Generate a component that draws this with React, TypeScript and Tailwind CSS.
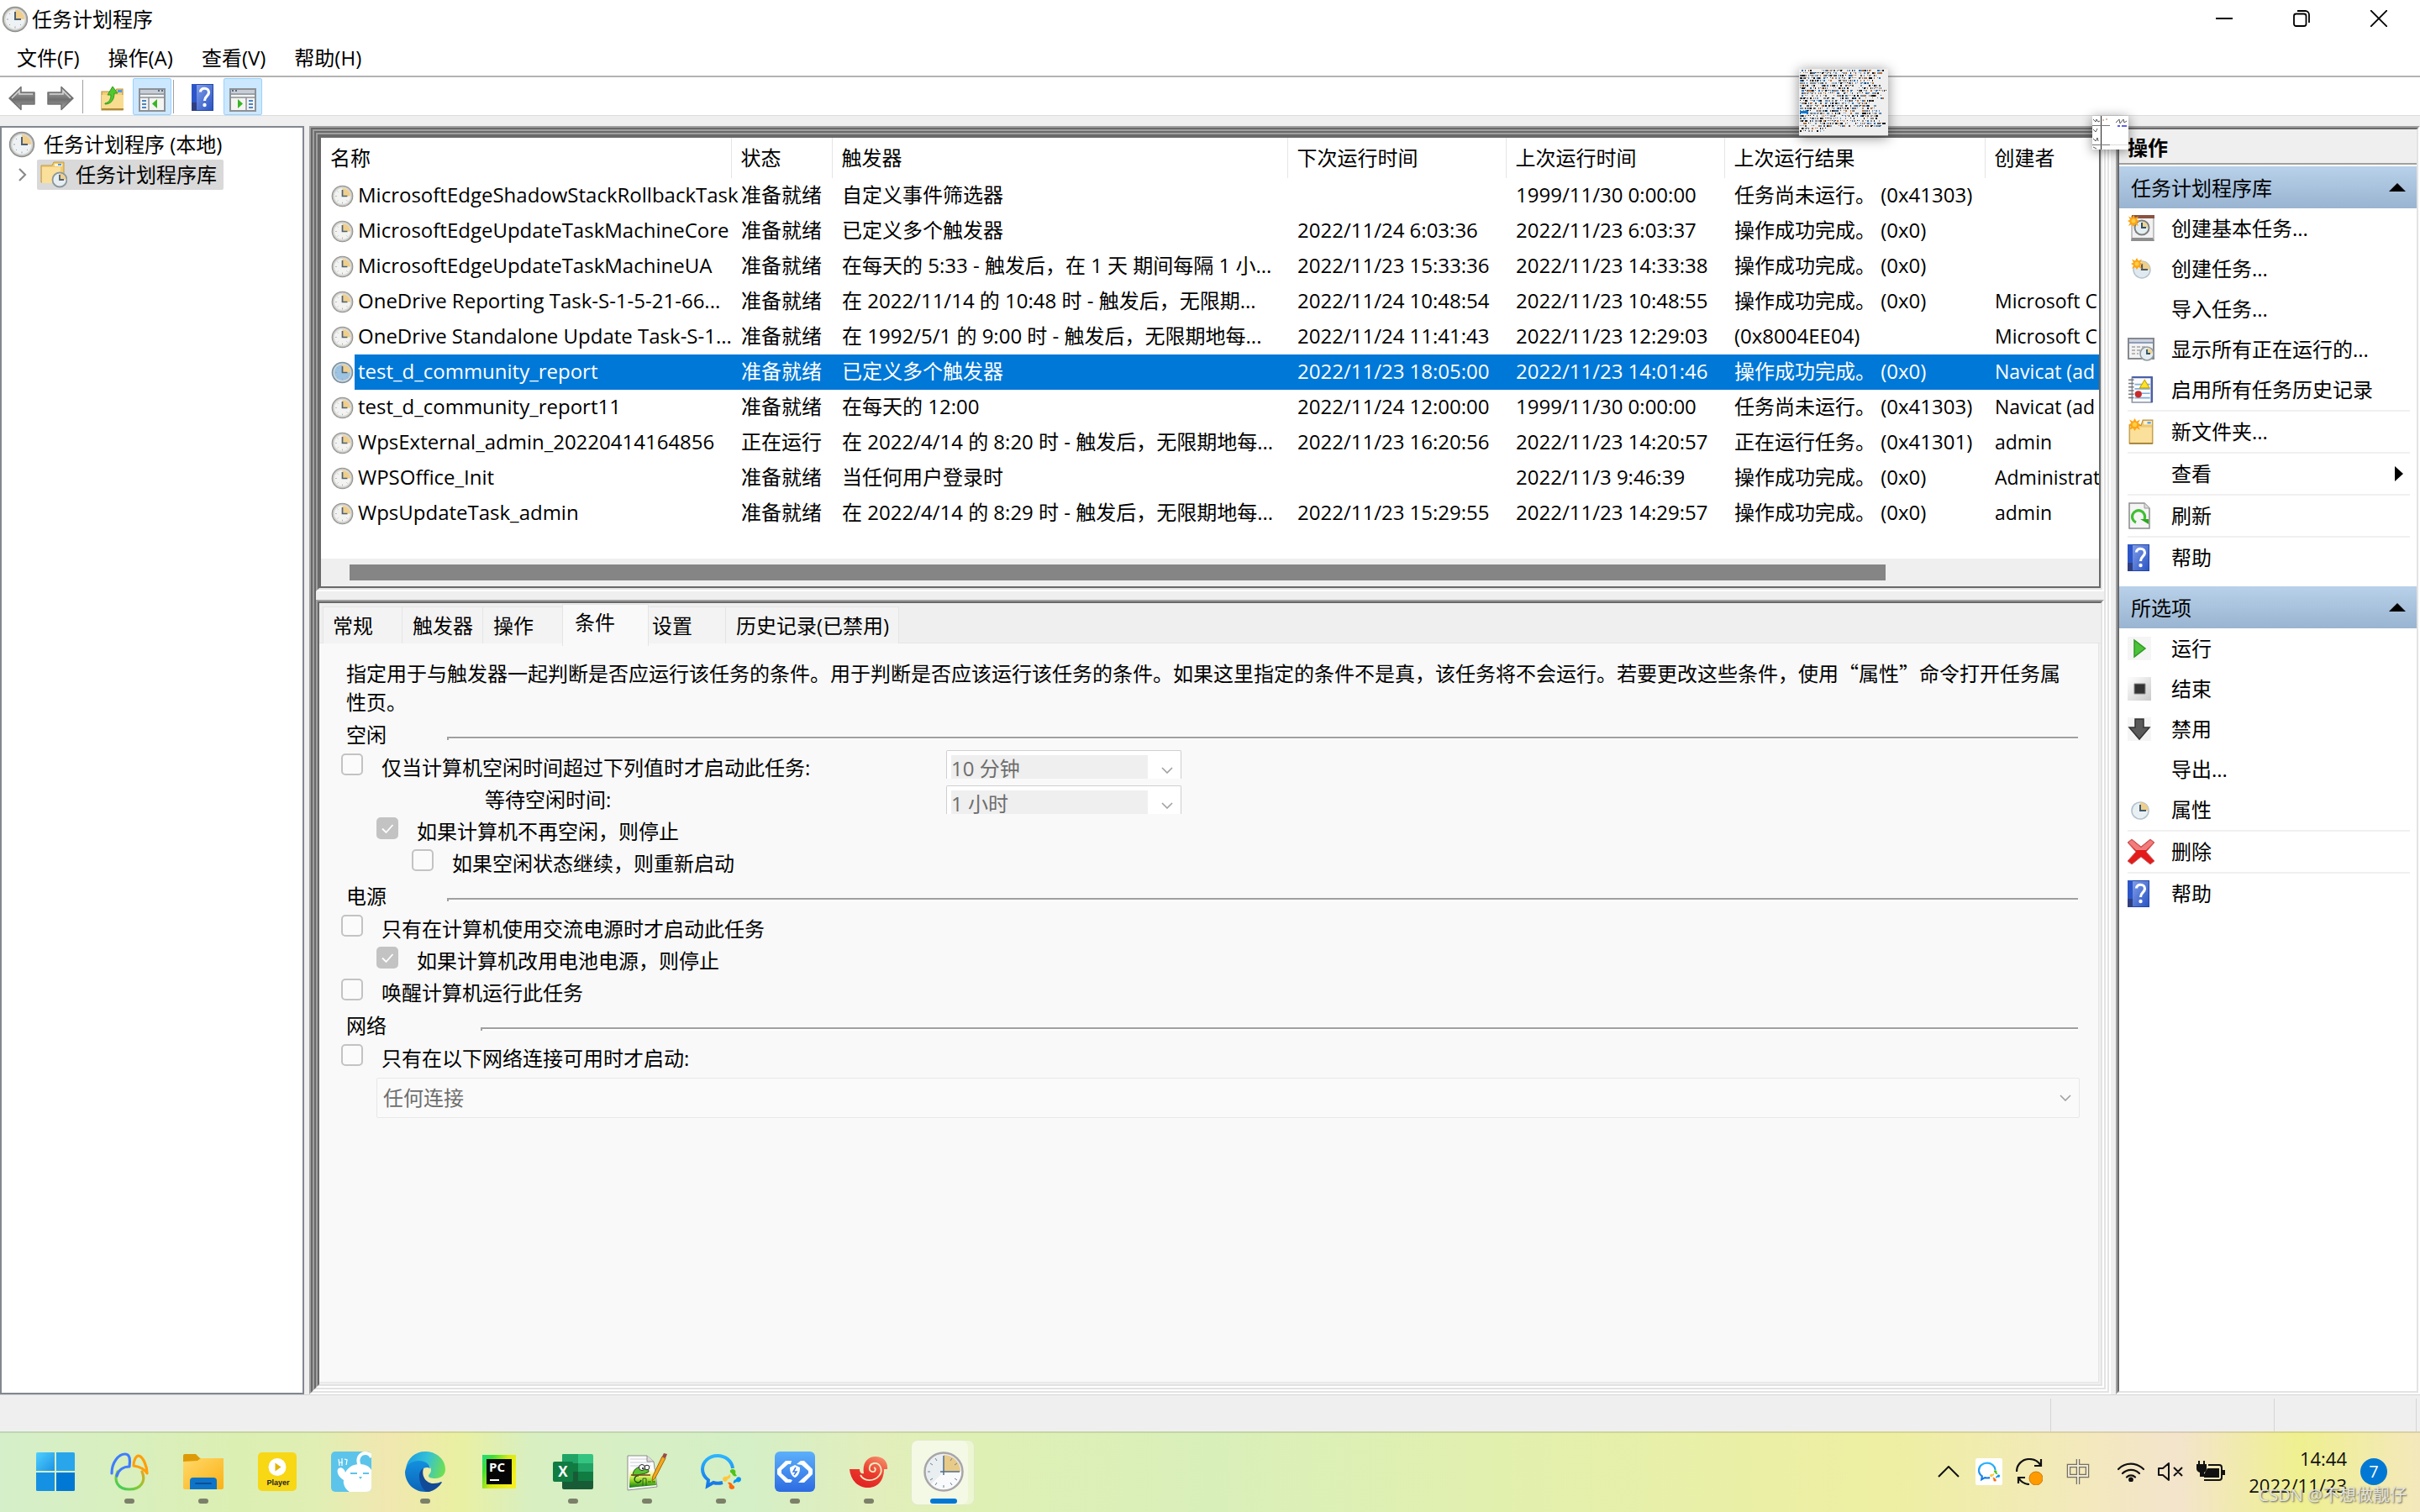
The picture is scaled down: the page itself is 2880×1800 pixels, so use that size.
import type { ReactNode } from 'react';
import clsx from 'clsx';

type Task = {
  name: string;
  state: string;
  trigger: string;
  next: string;
  last: string;
  result: string;
  author: string;
};

const tasks: Task[] = [
  { name: 'MicrosoftEdgeShadowStackRollbackTask', state: '准备就绪', trigger: '自定义事件筛选器', next: '', last: '1999/11/30 0:00:00', result: '任务尚未运行。 (0x41303)', author: '' },
  { name: 'MicrosoftEdgeUpdateTaskMachineCore', state: '准备就绪', trigger: '已定义多个触发器', next: '2022/11/24 6:03:36', last: '2022/11/23 6:03:37', result: '操作成功完成。 (0x0)', author: '' },
  { name: 'MicrosoftEdgeUpdateTaskMachineUA', state: '准备就绪', trigger: '在每天的 5:33 - 触发后，在 1 天 期间每隔 1 小...', next: '2022/11/23 15:33:36', last: '2022/11/23 14:33:38', result: '操作成功完成。 (0x0)', author: '' },
  { name: 'OneDrive Reporting Task-S-1-5-21-66...', state: '准备就绪', trigger: '在 2022/11/14 的 10:48 时 - 触发后，无限期...', next: '2022/11/24 10:48:54', last: '2022/11/23 10:48:55', result: '操作成功完成。 (0x0)', author: 'Microsoft C' },
  { name: 'OneDrive Standalone Update Task-S-1...', state: '准备就绪', trigger: '在 1992/5/1 的 9:00 时 - 触发后，无限期地每...', next: '2022/11/24 11:41:43', last: '2022/11/23 12:29:03', result: '(0x8004EE04)', author: 'Microsoft C' },
  { name: 'test_d_community_report', state: '准备就绪', trigger: '已定义多个触发器', next: '2022/11/23 18:05:00', last: '2022/11/23 14:01:46', result: '操作成功完成。 (0x0)', author: 'Navicat (ad' },
  { name: 'test_d_community_report11', state: '准备就绪', trigger: '在每天的 12:00', next: '2022/11/24 12:00:00', last: '1999/11/30 0:00:00', result: '任务尚未运行。 (0x41303)', author: 'Navicat (ad' },
  { name: 'WpsExternal_admin_20220414164856', state: '正在运行', trigger: '在 2022/4/14 的 8:20 时 - 触发后，无限期地每...', next: '2022/11/23 16:20:56', last: '2022/11/23 14:20:57', result: '正在运行任务。 (0x41301)', author: 'admin' },
  { name: 'WPSOffice_Init', state: '准备就绪', trigger: '当任何用户登录时', next: '', last: '2022/11/3 9:46:39', result: '操作成功完成。 (0x0)', author: 'Administrat' },
  { name: 'WpsUpdateTask_admin', state: '准备就绪', trigger: '在 2022/4/14 的 8:29 时 - 触发后，无限期地每...', next: '2022/11/23 15:29:55', last: '2022/11/23 14:29:57', result: '操作成功完成。 (0x0)', author: 'admin' },
];

const selectedTask = 'test_d_community_report';

/* Icons */

function ClockIcon({ className, tint = '#eef2f4', ring = '#a9a9a7' }: { className?: string; tint?: string; ring?: string }) {
  return (
    <svg viewBox="0 0 32 32" className={className}>
      <circle cx="16" cy="16" r="15.2" fill="#8b8b89" />
      <circle cx="16" cy="16" r="14.2" fill={ring} />
      <circle cx="16" cy="16" r="13" fill="#d9d9d6" />
      <circle cx="16" cy="16" r="11.4" fill={tint} />
      <path d="M16 16V4.6A11.4 11.4 0 0 1 27.4 16z" fill="#f0cf8c" />
      <path d="M16 7v9h7" fill="none" stroke="#4d6172" strokeWidth="2" />
      <path d="M16 24.5v2M6 16h2M9 9l1 1M9 23l1-1M23 23l-1-1" stroke="#9aa5ad" strokeWidth="1" />
    </svg>
  );
}

function BackArrow({ className }: { className?: string }) {
  return (
    <svg viewBox="0 0 32 30" className={className}>
      <defs>
        <linearGradient id="arrowGrey" x1="0" y1="0" x2="0" y2="1">
          <stop offset="0" stopColor="#b3b3b3" />
          <stop offset="0.55" stopColor="#6f6f6f" />
          <stop offset="1" stopColor="#a5a5a5" />
        </linearGradient>
      </defs>
      <path d="M1 15L15 1.500V8H31V22H15V28.500z" fill="url(#arrowGrey)" stroke="#717171" strokeWidth="1.500" strokeLinejoin="round" />
      <path d="M4 15L13 6V10H29" fill="none" stroke="#d6d6d6" strokeWidth="1.500" />
    </svg>
  );
}

function FolderUpIcon({ className }: { className?: string }) {
  return (
    <svg viewBox="0 0 28 30" className={className}>
      <path d="M1 7h16l2-3h7v25H1z" fill="#f3cf73" stroke="#b9933d" strokeWidth="1.200" />
      <path d="M1 11h26v18H1z" fill="#f8dc90" />
      <path d="M1 28h26" stroke="#b08a37" strokeWidth="2" />
      <path d="M20 5h5v3h-5z" fill="#4d9be6" />
      <path d="M5 21c5-1 7-5 7-10H8l6-10 6 8h-4c0 8-4 13-11 13z" fill="#4fc92f" stroke="#2f9c1b" strokeWidth="1" />
    </svg>
  );
}

function PaneIcon({ className, flip }: { className?: string; flip?: boolean }) {
  return (
    <svg viewBox="0 0 32 28" className={clsx(className, flip && '-scale-x-100')}>
      <path d="M1 1h30v26H1z" fill="#f4f4f2" stroke="#8c9196" strokeWidth="2" />
      <path d="M2 2h28v4H2z" fill="#c9ced6" />
      <path d="M2 7h28" stroke="#7c8795" strokeWidth="1.500" />
      <path d="M2 11h28" stroke="#8c9196" strokeWidth="1.500" />
      <path d="M12 11v15" stroke="#8c9196" strokeWidth="1.500" />
      <path d="M4 15h5M4 19h5M4 23h5" stroke="#4a86c6" strokeWidth="2" />
      <path d="M22 13v11l-6-5.500z" fill="#37b525" />
      <path d="M23 3h2M27 3h2" stroke="#556a88" strokeWidth="2" />
    </svg>
  );
}

function HelpIcon({ className }: { className?: string }) {
  return (
    <svg viewBox="0 0 26 32" preserveAspectRatio="none" className={className}>
      <defs>
        <linearGradient id="helpBlue" x1="0" y1="0" x2="1" y2="1">
          <stop offset="0" stopColor="#7f9ce8" />
          <stop offset="1" stopColor="#2a55c4" />
        </linearGradient>
      </defs>
      <path d="M0 0h26v32H0z" fill="#2446a8" />
      <path d="M6 1h19v30H6z" fill="url(#helpBlue)" />
      <path d="M0 0h6v32H0z" fill="#2c56c8" />
      <path d="M0 22h6v10H0z" fill="#2f3f80" />
      <path d="M10.500 9.500C10.500 3.500 20.500 4 20.500 10c0 4.500-5 4.500-5 10" fill="none" stroke="#fff" strokeWidth="3.200" />
      <circle cx="15.500" cy="25" r="2.200" fill="#fff" />
    </svg>
  );
}

function TaskFolderIcon({ className }: { className?: string }) {
  return (
    <svg viewBox="0 0 32 32" className={className}>
      <path d="M1 5h13l2-4h12v24H1z" fill="#f0cb72" stroke="#c29a45" strokeWidth="1" />
      <path d="M2 7h22v19H2z" fill="#fae09a" />
      <path d="M17 3h9v3h-9z" fill="#fff5d8" />
      <path d="M21 3h4v2h-4z" fill="#4d9be6" />
      <circle cx="23" cy="22" r="8.500" fill="#e6eef2" stroke="#8b979d" strokeWidth="1.800" />
      <path d="M23 22v-7.500a7.500 7.500 0 0 1 7.500 7.500z" fill="#f0cf8c" />
      <path d="M23 16v6h5" fill="none" stroke="#4d6172" strokeWidth="1.800" />
    </svg>
  );
}

function Star({ x, y }: { x: number; y: number }) {
  return (
    <g transform={`translate(${x} ${y})`}>
      <path d="M0-7l2 3.500 4-2-2 4L7 0 4 2l2 4-4-2L0 7l-2-3-4 2 2-4-3-2 3-1.500-2-4 4 2z" fill="#ffa412" />
      <circle r="2.500" fill="#ffcf4a" />
    </g>
  );
}

function BasicTaskIcon() {
  return (
    <svg viewBox="0 0 32 32" className="size-8">
      <path d="M5 1h26v29H5z" fill="#f1f1f1" stroke="#8d8d8d" />
      <path d="M5 0h27v4H5z" fill="#8a5341" />
      <path d="M5 27h25l2 4H4z" fill="#8e8e8e" />
      <circle cx="17" cy="15" r="8.500" fill="#e4eef2" stroke="#7d7f80" strokeWidth="2" />
      <path d="M17 15V8a7 7 0 0 1 7 7z" fill="#efd28f" />
      <path d="M17 9v6h5" fill="none" stroke="#2f5068" strokeWidth="2" />
      <Star x={7} y={7} />
    </svg>
  );
}

function NewTaskIcon() {
  return (
    <svg viewBox="0 0 32 32" className="size-8">
      <circle cx="17" cy="17" r="10" fill="#dfe9ef" stroke="#b3c3cd" strokeWidth="1.500" />
      <path d="M17 17V7a10 10 0 0 1 10 10z" fill="#efcf8a" />
      <path d="M17 10v7h7" fill="none" stroke="#4f5a63" strokeWidth="2.200" />
      <Star x={11} y={10} />
    </svg>
  );
}

function RunningTasksIcon() {
  return (
    <svg viewBox="0 0 32 28" className="h-7 w-8">
      <path d="M1 1h30v24H1z" fill="#f2f2f2" stroke="#85898f" strokeWidth="2" />
      <path d="M2 2h28v3H2z" fill="#cdd3e0" />
      <path d="M2 6h28" stroke="#6c7fa6" strokeWidth="1.500" />
      <path d="M5 11h10M5 15h10M5 19h8M17 11h5" stroke="#a3a3a3" strokeWidth="1.500" strokeDasharray="4 2" />
      <circle cx="23" cy="19" r="8" fill="#e4eef2" stroke="#909aa0" strokeWidth="1.600" />
      <path d="M23 19v-6.500a6.500 6.500 0 0 1 6.500 6.500z" fill="#efd28f" />
      <path d="M23 14v5h4" fill="none" stroke="#2f5068" strokeWidth="1.800" />
    </svg>
  );
}

function HistoryIcon() {
  return (
    <svg viewBox="0 0 30 30" className="h-8 w-8">
      <path d="M5 1h22v28H5z" fill="#fbfbff" stroke="#8a93a8" strokeWidth="1.500" />
      <path d="M27 1v28M5 1h23" stroke="#4a60a5" strokeWidth="2.400" />
      <path d="M8 9h17M8 14h17M8 19h17M8 24h17" stroke="#7fb0d6" strokeWidth="1.600" />
      <path d="M1 4h6M1 8h6M1 12h6M1 16h6M1 20h6M1 24h6" stroke="#777" strokeWidth="1.400" />
      <path d="M19 4l5.500 9h-11z" fill="#ffe22a" stroke="#c7a700" />
      <circle cx="12" cy="20" r="3.800" fill="#c92a2a" />
    </svg>
  );
}

function NewFolderIcon() {
  return (
    <svg viewBox="0 0 30 30" className="h-8 w-8">
      <path d="M2 8h13l2-6h11v26H2z" fill="#eec873" stroke="#b88f3a" />
      <path d="M3 10h24v17H3z" fill="#fae09a" />
      <path d="M18 3h9v4h-9z" fill="#fff3d2" />
      <path d="M22 4h4v2h-4z" fill="#4d9be6" />
      <path d="M2 28h26" stroke="#a07c30" strokeWidth="1.500" />
      <Star x={8} y={7} />
    </svg>
  );
}

function RefreshIcon() {
  return (
    <svg viewBox="0 0 28 32" className="h-8 w-7">
      <path d="M2 1h18l6 6v24H2z" fill="#f5f5f5" stroke="#8b8b8b" strokeWidth="1.500" />
      <path d="M20 1v6h6" fill="#ddd" stroke="#9a9a9a" />
      <path d="M10 24a7.500 7.500 0 1 1 10-4" fill="none" stroke="#3fbf33" strokeWidth="3.200" />
      <path d="M15 20h10v6z" fill="#2da822" />
    </svg>
  );
}

function RunIcon() {
  return (
    <svg viewBox="0 0 28 28" className="size-7">
      <path d="M0 0h28v28H0z" fill="#f5f5f5" />
      <path d="M8 4l13 10L8 24z" fill="#4bc23a" stroke="#2f9b22" strokeWidth="1.500" />
    </svg>
  );
}

function StopIcon() {
  return (
    <svg viewBox="0 0 28 28" className="size-7">
      <defs>
        <linearGradient id="stopBg" x1="0" y1="0" x2="1" y2="1">
          <stop offset="0.1" stopColor="#fafafa" />
          <stop offset="1" stopColor="#c9c9c9" />
        </linearGradient>
      </defs>
      <path d="M0 0h28v28H0z" fill="url(#stopBg)" />
      <path d="M8 8h13v12H8z" fill="#333" stroke="#8a8a8a" />
    </svg>
  );
}

function DisableIcon() {
  return (
    <svg viewBox="0 0 28 28" className="size-7">
      <path d="M0 0h28v28H0z" fill="#f5f5f5" />
      <path d="M9 2h10v10h7L14 26 2 12h7z" fill="#5a5a5a" stroke="#333" strokeWidth="1.500" />
    </svg>
  );
}

function PropertiesIcon() {
  return (
    <svg viewBox="0 0 28 28" className="size-7">
      <circle cx="15" cy="15" r="10" fill="#e9f0f4" stroke="#b3c3cd" strokeWidth="1.600" />
      <path d="M15 15V5a10 10 0 0 1 10 10z" fill="#efcf8a" />
      <path d="M15 8v7h7" fill="none" stroke="#3e5a72" strokeWidth="2" />
    </svg>
  );
}

function DeleteIcon() {
  return (
    <svg viewBox="0 0 32 32" className="size-8">
      <path d="M5 1l11 9L27 1l5 4-10 11 10 11-5 4-11-9-11 9-5-4 10-11L0 5z" fill="#e31b1b" stroke="#c46a6a" />
      <path d="M5 2l11 9 11-9 4 3-9 9H10L1 5z" fill="#f07d7d" />
    </svg>
  );
}

/* Two-step sunken edge used by every MMC pane */
function Sunken({ className, children }: { className?: string; children: ReactNode }) {
  return (
    <div className={clsx('flex min-w-0 flex-col border-2 border-t-[#a0a0a0] border-r-white border-b-white border-l-[#a0a0a0]', className)}>
      <div className="flex min-w-0 flex-1 flex-col border-2 border-t-[#696969] border-r-[#e3e3e3] border-b-[#e3e3e3] border-l-[#696969]">
        {children}
      </div>
    </div>
  );
}

function TitleBar() {
  return (
    <header className="flex h-12 items-center justify-between">
      <div className="flex items-center gap-1 pb-[2px] pl-[2px]">
        <ClockIcon className="size-8" />
        <h1 className="leading-8">任务计划程序</h1>
      </div>
      <div className="flex h-11 self-start pr-[3px]">
        <button aria-label="最小化" className="flex w-[92px] items-center justify-center">
          <svg viewBox="0 0 20 20" className="size-5"><path d="M0 10h20" stroke="#000" strokeWidth="2" /></svg>
        </button>
        <button aria-label="还原" className="flex w-[92px] items-center justify-center">
          <svg viewBox="0 0 20 20" className="size-5" fill="none" stroke="#000" strokeWidth="1.800">
            <rect x="1" y="4.500" width="14.500" height="14.500" rx="2.500" />
            <path d="M5 1h9.500A4.500 4.500 0 0 1 19 5.500V15" />
          </svg>
        </button>
        <button aria-label="关闭" className="flex w-[92px] items-center justify-center">
          <svg viewBox="0 0 20 20" className="size-5"><path d="M0 0l20 20M20 0L0 20" stroke="#000" strokeWidth="1.800" /></svg>
        </button>
      </div>
    </header>
  );
}

function Toolbar() {
  return (
    <div className="flex h-[46px] items-center border-b border-[#dcdcdc] pl-[10px]">
      <button aria-label="后退"><BackArrow className="mt-1 h-[30px] w-8" /></button>
      <button aria-label="前进" className="ml-[14px]"><BackArrow className="mt-1 h-[30px] w-8 -scale-x-100" /></button>
      <div className="ml-[10px] h-10 w-px bg-[#a0a0a0]" />
      <button aria-label="向上一级" className="ml-[21px]"><FolderUpIcon className="mt-1 h-[30px] w-7" /></button>
      <button aria-label="显示控制台树" className="ml-[10px] flex h-11 w-[46px] items-center justify-center rounded-xs border border-[#99d1ff] bg-[#cce8ff]">
        <PaneIcon className="mt-2 h-7 w-8" />
      </button>
      <div className="ml-[2px] h-10 w-px bg-[#a0a0a0]" />
      <button aria-label="帮助主题" className="ml-[21px]"><HelpIcon className="mt-[2px] h-8 w-[26px]" /></button>
      <button aria-label="显示操作窗格" className="ml-[12px] flex h-11 w-[46px] items-center justify-center rounded-xs border border-[#99d1ff] bg-[#cce8ff]">
        <PaneIcon flip className="mt-2 h-7 w-8" />
      </button>
    </div>
  );
}

function TreePane() {
  return (
    <nav className="w-[362px] shrink-0 border-2 border-[#828790] bg-white pt-[2px]">
      <div className="flex h-9 items-center gap-[10px] pl-2">
        <ClockIcon className="size-8" />
        <span>任务计划程序 (本地)</span>
      </div>
      <div className="flex h-9 items-center gap-3 pl-5">
        <svg viewBox="0 0 10 16" className="h-4 w-[10px]"><path d="M1 1l7 7-7 7" fill="none" stroke="#8a8a8a" strokeWidth="2.200" /></svg>
        <div className="flex h-9 items-center gap-[10px] rounded-xs bg-[#d9d9d9] pr-2 pl-1">
          <TaskFolderIcon className="size-8" />
          <span>任务计划程序库</span>
        </div>
      </div>
    </nav>
  );
}

function TaskTable() {
  return (
    <table className="w-full table-fixed border-collapse text-left whitespace-nowrap">
      <colgroup>
        <col className="w-[488px]" />
        <col className="w-[120px]" />
        <col />
        <col className="w-[260px]" />
        <col className="w-[260px]" />
        <col className="w-[310px]" />
        <col className="w-[136px]" />
      </colgroup>
      <thead>
        <tr className="h-12">
          {['名称', '状态', '触发器', '下次运行时间', '上次运行时间', '上次运行结果', '创建者'].map((label) => (
            <th key={label} className="border-r border-[#e5e5e5] p-0 pl-[11px] font-normal last:border-r-0">{label}</th>
          ))}
        </tr>
      </thead>
      <tbody>
        {tasks.map((task) => {
          const selected = task.name === selectedTask;
          return (
            <tr key={task.name} className={clsx('h-[42px]', selected && 'text-white')}>
              <td className="p-0">
                <div className="flex h-[42px] items-center">
                  <span className="w-10 shrink-0 pl-3">
                    <ClockIcon className="size-[27px]" tint={selected ? '#9cc3e2' : '#f3f3f1'} ring={selected ? '#6f9cc0' : '#b4b4b2'} />
                  </span>
                  <span className={clsx('flex h-full flex-1 items-center pb-[2px] pl-1', selected && 'bg-[#0078d7]')}>{task.name}</span>
                </div>
              </td>
              {[task.state, task.trigger, task.next, task.last, task.result, task.author].map((value, i) => (
                <td key={i} className={clsx('p-0 pb-[2px] pl-3 last:text-[23px]', selected && 'bg-[#0078d7]')}>{value}</td>
              ))}
            </tr>
          );
        })}
      </tbody>
    </table>
  );
}

function Tabs() {
  const tab = 'mt-1 h-[44px] border-t border-r border-[#e5e5e5] bg-[#f3f3f3] text-left';
  return (
    <div role="tablist" className="flex h-12 border-b border-[#e5e5e5] pl-1">
      <button role="tab" className={clsx(tab, 'w-[95px] border-l pl-[11px]')}>常规</button>
      <button role="tab" className={clsx(tab, 'w-[96px] pl-3')}>触发器</button>
      <button role="tab" className={clsx(tab, 'w-[94px] border-r-0 pl-3')}>操作</button>
      <button role="tab" aria-selected="true" className="relative mt-px h-[50px] w-[103px] border border-b-0 border-[#e5e5e5] bg-[#f9f9f9] pb-2 pl-[14px] text-left">条件</button>
      <button role="tab" className={clsx(tab, 'w-[92px] pl-1')}>设置</button>
      <button role="tab" className={clsx(tab, 'w-[206px] pl-3')}>历史记录(已禁用)</button>
    </div>
  );
}

function Check({ id, label, checked, className }: { id: string; label: string; checked?: boolean; className: string }) {
  return (
    <div className={clsx('flex h-[38px] items-start gap-[22px]', className)}>
      <span className="relative mt-[2px] size-[26px]">
        <input
          id={id}
          type="checkbox"
          disabled
          defaultChecked={checked}
          className="block size-[26px] appearance-none rounded-[5px] border-2 border-[#c3c3c3] bg-[#fbfbfb] checked:bg-[#c3c3c3]"
        />
        {checked && (
          <svg viewBox="0 0 26 26" className="absolute inset-0 size-[26px]"><path d="M7 13.500l4.500 4.500L19.500 9" fill="none" stroke="#fff" strokeWidth="1.800" /></svg>
        )}
      </span>
      <label htmlFor={id} className="leading-[38px]">{label}</label>
    </div>
  );
}

function GroupHeading({ label, labelWidth }: { label: string; labelWidth: string }) {
  return (
    <div className="flex h-10 items-center pr-6 pl-8">
      <h3 className={clsx('shrink-0', labelWidth)}>{label}</h3>
      <div className="mt-2 h-1 flex-1 border-t-2 border-l-2 border-[#a0a0a0] bg-white" />
    </div>
  );
}

function Chevron() {
  return (
    <svg viewBox="0 0 14 8" className="h-2 w-[14px]"><path d="M1 1l6 6 6-6" fill="none" stroke="#a0a0a0" strokeWidth="1.600" /></svg>
  );
}

function SmallSelect({ label, value }: { label: string; value: string }) {
  return (
    <div className="flex h-[34px] w-[280px] items-end gap-4 overflow-hidden rounded-t-xs border border-b-0 border-[#cfcfcf] bg-white pl-[5px]">
      <select aria-label={label} disabled className="h-7 w-[234px] appearance-none bg-[#efefef] pt-[2px] leading-7 text-[#6d6d6d] opacity-100">
        <option>{value}</option>
      </select>
      <span className="flex pb-[6px]"><Chevron /></span>
    </div>
  );
}

function ConditionsPanel() {
  return (
    <section className="mr-[2px] mb-[2px] flex-1 border-r border-b border-[#e5e5e5] bg-[#f9f9f9] pt-[18px]">
      <p className="pr-9 pb-[2px] pl-8 leading-[34px]">
        指定用于与触发器一起判断是否应运行该任务的条件。用于判断是否应该运行该任务的条件。如果这里指定的条件不是真，该任务将不会运行。若要更改这些条件，使用
        <span className="font-['Noto_Sans_CJK_SC',sans-serif]">“属性”</span>
        命令打开任务属性页。
      </p>

      <GroupHeading label="空闲" labelWidth="w-[120px]" />
      <div className="flex items-start">
        <div className="w-[746px]">
          <Check id="idle-start" label="仅当计算机空闲时间超过下列值时才启动此任务:" className="pl-[26px]" />
          <div className="h-[38px] pl-[197px] leading-[38px]">等待空闲时间:</div>
        </div>
        <div className="-mt-[2px] flex flex-col gap-2">
          <SmallSelect label="空闲时间" value="10 分钟" />
          <SmallSelect label="等待空闲时间" value="1 小时" />
        </div>
      </div>
      <Check id="idle-stop" label="如果计算机不再空闲，则停止" checked className="pl-[68px]" />
      <Check id="idle-restart" label="如果空闲状态继续，则重新启动" className="pl-[110px]" />

      <GroupHeading label="电源" labelWidth="w-[120px]" />
      <Check id="ac-power" label="只有在计算机使用交流电源时才启动此任务" className="pl-[26px]" />
      <Check id="battery-stop" label="如果计算机改用电池电源，则停止" checked className="pl-[68px]" />
      <Check id="wake" label="唤醒计算机运行此任务" className="pl-[26px]" />

      <GroupHeading label="网络" labelWidth="w-[160px]" />
      <Check id="network" label="只有在以下网络连接可用时才启动:" className="pl-[26px]" />
      <div className="mt-1 mr-[22px] ml-[68px] flex h-12 items-center rounded-xs border border-[#e8e8e8] bg-[#fafafa] pr-[9px] pl-[7px]">
        <select aria-label="网络连接" disabled className="flex-1 appearance-none text-[#6d6d6d] opacity-100">
          <option>任何连接</option>
        </select>
        <Chevron />
      </div>
    </section>
  );
}

function ActionHeader({ label }: { label: string }) {
  return (
    <div className="flex h-[50px] items-center justify-between bg-linear-to-b from-[#b9d1ea] to-[#99b4d1] pr-[13px] pl-[14px]">
      <h3 className="pt-[2px]">{label}</h3>
      <svg viewBox="0 0 20 10" className="h-[10px] w-5"><path d="M10 0l10 10H0z" /></svg>
    </div>
  );
}

function ActionItem({ icon, label, submenu }: { icon?: ReactNode; label: string; submenu?: boolean }) {
  return (
    <button className="flex h-12 w-full items-center pr-4 pl-[10px] text-left">
      <span className="flex w-[52px] shrink-0">{icon}</span>
      <span className="flex-1">{label}</span>
      {submenu && <svg viewBox="0 0 10 18" className="h-[18px] w-[10px]"><path d="M0 0l10 9-10 9z" /></svg>}
    </button>
  );
}

function Divider() {
  return <div className="mr-2 ml-[10px] h-[2px] bg-[#f0f0f0]" />;
}

function ActionsPane() {
  return (
    <Sunken className="w-[362px] shrink-0">
      <div className="mt-1 border-b-2 border-[#a0a0a0] bg-[#efefef] pl-[10px] leading-9 font-bold">操作</div>
      <div className="flex-1 bg-white pt-[2px]">
        <ActionHeader label="任务计划程序库" />
        <ActionItem icon={<BasicTaskIcon />} label="创建基本任务..." />
        <ActionItem icon={<NewTaskIcon />} label="创建任务..." />
        <ActionItem label="导入任务..." />
        <ActionItem icon={<RunningTasksIcon />} label="显示所有正在运行的..." />
        <ActionItem icon={<HistoryIcon />} label="启用所有任务历史记录" />
        <Divider />
        <ActionItem icon={<NewFolderIcon />} label="新文件夹..." />
        <Divider />
        <ActionItem label="查看" submenu />
        <Divider />
        <ActionItem icon={<RefreshIcon />} label="刷新" />
        <Divider />
        <ActionItem icon={<HelpIcon className="h-8 w-[26px]" />} label="帮助" />
        <div className="h-[10px]" />
        <ActionHeader label="所选项" />
        <ActionItem icon={<RunIcon />} label="运行" />
        <ActionItem icon={<StopIcon />} label="结束" />
        <ActionItem icon={<DisableIcon />} label="禁用" />
        <ActionItem label="导出..." />
        <ActionItem icon={<PropertiesIcon />} label="属性" />
        <Divider />
        <ActionItem icon={<DeleteIcon />} label="删除" />
        <Divider />
        <ActionItem icon={<HelpIcon className="h-8 w-[26px]" />} label="帮助" />
      </div>
    </Sunken>
  );
}

/* Miniature windows floating over the frame */
const inkColors = ['#1d1d1d', '#555555', '#2f6fb3', '#8a8a8a', '#b5713a', '#111111', '#6f8fb0'];

function noise(row: number, col: number) {
  const v = Math.sin(row * 127.1 + col * 311.7) * 43758.5453;
  return v - Math.floor(v);
}

function Thumbnails() {
  return (
    <>
      <svg viewBox="0 0 106 80" className="absolute top-[82px] left-[74.340%] h-20 w-[106px] bg-[#efefef] shadow-[0_2px_14px_rgba(0,0,0,0.45)]">
        {[...Array(25)].map((_, row) =>
          [...Array(52)].map((_, col) => {
            const n = noise(row, col);
            const rowEnd = row > 22 ? 14 + (24 - row) * 2 : 42 + noise(row, 99) * 10;
            if (n < 0.3 || col > rowEnd) return null;
            return (
              <rect
                key={`${row}-${col}`}
                x={1 + col * 2}
                y={1 + row * 3}
                width={n > 0.7 ? 2 : 1}
                height={n > 0.5 ? 2 : 1}
                fill={inkColors[Math.floor(n * 97) % 7]}
              />
            );
          }),
        )}
        <rect x="1" y="50" width="10" height="3" fill="#0078d7" />
        <path d="M0 79.500h106" stroke="#8e8e8e" />
      </svg>
      <svg viewBox="0 0 43 40" className="absolute top-[138px] left-[86.460%] h-10 w-[43px] bg-white shadow-[0_2px_14px_rgba(0,0,0,0.45)]">
        <path d="M10.500 0v40" stroke="#222" />
        <path d="M0 11.500h21M0 34.500h21" stroke="#777" />
        <path d="M21 34.500h22" stroke="#ddd" />
        <path d="M1 4l3 3 1-3 2 3 2-1M1 16l3 3 2-4M1 27l3 3 2-4 1 4M1 37l4 2M28 8l4-4 1 5 4-5 1 4 3-2" fill="none" stroke="#555" strokeWidth="1" />
        <path d="M12 5h2M16 4h2" stroke="#b5713a" />
        <path d="M30 12h3M35 12h6" stroke="#2b2be0" strokeWidth="1.500" />
      </svg>
    </>
  );
}

/* Taskbar */

function StartLogo() {
  return (
    <svg viewBox="0 0 46 46" className="size-[46px]">
      <defs>
        <linearGradient id="winBlue" x1="0" y1="0" x2="1" y2="1" gradientUnits="objectBoundingBox">
          <stop offset="0" stopColor="#4fd0ff" />
          <stop offset="1" stopColor="#1e93e4" />
        </linearGradient>
      </defs>
      <path d="M1.500 0H22v22H0V1.500A1.500 1.500 0 0 1 1.500 0z" fill="url(#winBlue)" />
      <path d="M24 0h20.500A1.500 1.500 0 0 1 46 1.500V22H24z" fill="#29a5ec" />
      <path d="M0 24h22v22H1.500A1.500 1.500 0 0 1 0 44.500z" fill="#1591e4" />
      <path d="M24 24h22v20.500a1.500 1.500 0 0 1-1.500 1.500H24z" fill="#0078d4" />
    </svg>
  );
}

function NavicatLogo() {
  return (
    <svg viewBox="0 0 48 48" className="size-12" fill="none" strokeWidth="3.200" strokeLinecap="round" strokeLinejoin="round">
      <defs>
        <linearGradient id="ringGreen" x1="1" y1="0" x2="0" y2="1">
          <stop offset="0" stopColor="#e0a828" />
          <stop offset="0.500" stopColor="#8bc832" />
          <stop offset="1" stopColor="#30d060" />
        </linearGradient>
      </defs>
      <path d="M10 24c-5 11 0 21 14 21s20-10 15-21" stroke="url(#ringGreen)" />
      <path d="M3 26C3 13 11 3 19 3c6 0 6 8 5 15-7 0-13 4-15 11" stroke="#3f7dff" />
      <path d="M29 17c0-7 3-12 6-12 5 1 10 12 10 21-3-5-9-8-16-9z" stroke="#ff9f0a" />
    </svg>
  );
}

function ExplorerLogo() {
  return (
    <svg viewBox="0 0 48 42" className="h-[42px] w-12">
      <defs>
        <linearGradient id="folderGold" x1="0" y1="0" x2="1" y2="1">
          <stop offset="0" stopColor="#ffd96b" />
          <stop offset="1" stopColor="#fbb114" />
        </linearGradient>
      </defs>
      <path d="M0 2a2 2 0 0 1 2-2h13l5 5h26a2 2 0 0 1 2 2v5H0z" fill="#dd9a06" />
      <path d="M0 9l17-1 4-3h25a2 2 0 0 1 2 2v33a2 2 0 0 1-2 2H2a2 2 0 0 1-2-2z" fill="url(#folderGold)" />
      <path d="M8 42V32a4 4 0 0 1 4-4h24a4 4 0 0 1 4 4v10z" fill="#0f74c8" />
      <path d="M15 35h18" stroke="#0a4f93" strokeWidth="2" strokeLinecap="round" />
    </svg>
  );
}

function PlayerLogo() {
  return (
    <svg viewBox="0 0 46 46" className="size-[46px]">
      <rect width="46" height="46" rx="5" fill="#f8d714" />
      <circle cx="23" cy="17.500" r="10.500" fill="#fff" />
      <path d="M20.500 12.500l7 5-7 5z" fill="#e0b400" />
      <text x="24" y="39" textAnchor="middle" fontSize="9" fontWeight="700" fontFamily="Liberation Sans" fill="#222">Player</text>
    </svg>
  );
}

function RabbitLogo() {
  return (
    <svg viewBox="0 0 48 48" className="size-12">
      <rect width="48" height="48" rx="5" fill="#5cc4ea" />
      <path d="M34 17c-4-8 0-15 7-15 3 0 6 2 7 5" fill="none" stroke="#fff" strokeWidth="4" />
      <path d="M8 21c3-4 8-1 9 4 3-6 9-10 17-10 7 0 12 3 14 7v22c-1 3-3 4-6 4H22c-5-3-8-9-7-14-4-2-9-8-7-13z" fill="#fff" />
      <path d="M23 26h8M38 26h7" stroke="#5cc4ea" strokeWidth="2" />
      <path d="M33 30h4l-2 3z" fill="#5cc4ea" />
      <path d="M9 9l1 8M13 8v9M10 13h4M16 9l3 1-1 6" stroke="#fff" strokeWidth="1.200" fill="none" />
    </svg>
  );
}

function EdgeLogo() {
  return (
    <svg viewBox="0 0 48 48" className="size-12">
      <defs>
        <linearGradient id="edgeTop" x1="0" y1="0.400" x2="1" y2="0.600">
          <stop offset="0" stopColor="#1b9de2" />
          <stop offset="0.500" stopColor="#35c1d6" />
          <stop offset="1" stopColor="#6fe04f" />
        </linearGradient>
        <linearGradient id="edgeLeft" x1="0" y1="0" x2="0" y2="1">
          <stop offset="0" stopColor="#1490df" />
          <stop offset="1" stopColor="#0b63b8" />
        </linearGradient>
      </defs>
      <path d="M1 20C3 8 12 0 24 0c14 0 24 10 24 21 0 7-5 11-12 11-5 0-8-1-8-3s3-3 3-7c0-5-6-9-13-9-8 0-14 4-17 7z" fill="url(#edgeTop)" />
      <path d="M0 24c1-8 8-13 16-13 8 0 13 4 14 9-7-3-12 2-12 9 0 9 6 16 13 18-2 1-5 1-7 1C10 48 0 37 0 24z" fill="url(#edgeLeft)" />
      <path d="M17 29c0-4 2-8 5-9-3 9 3 18 12 18 4 0 7-1 9-2 1 0 1 1 0 2-4 6-11 10-17 10-6-3-9-12-9-19z" fill="#114a96" />
    </svg>
  );
}

function PyCharmLogo() {
  return (
    <svg viewBox="0 0 40 40" className="size-10">
      <defs>
        <linearGradient id="pyc" x1="0" y1="0" x2="1" y2="0.600">
          <stop offset="0" stopColor="#21d789" />
          <stop offset="0.250" stopColor="#3fe032" />
          <stop offset="0.600" stopColor="#d8ea10" />
          <stop offset="1" stopColor="#f5ee20" />
        </linearGradient>
      </defs>
      <path d="M0 0h40v40H0z" fill="url(#pyc)" />
      <path d="M5 5h30v30H5z" fill="#050505" />
      <text x="8" y="20" fontSize="15" fontWeight="700" fontFamily="Open Sans" fill="#fff">PC</text>
      <path d="M9 30h11" stroke="#fff" strokeWidth="2" />
    </svg>
  );
}

function ExcelLogo() {
  return (
    <svg viewBox="0 0 48 44" className="h-11 w-12">
      <path d="M11 2a1 1 0 0 1 1-1h18v11H11z" fill="#21a366" />
      <path d="M30 1h16a2 2 0 0 1 2 2v9H30z" fill="#33c481" />
      <path d="M11 12h19v10H11z" fill="#107c41" />
      <path d="M30 12h18v10H30z" fill="#21a366" />
      <path d="M30 22h18v11H30z" fill="#107c41" />
      <path d="M11 22h19v11h18v8a2 2 0 0 1-2 2H13a2 2 0 0 1-2-2z" fill="#185c37" />
      <rect x="0" y="10" width="24" height="24" rx="2" fill="#107c41" />
      <text x="12" y="28" textAnchor="middle" fontSize="17" fontWeight="700" fontFamily="Open Sans" fill="#fff">X</text>
    </svg>
  );
}

function NotepadPPLogo() {
  return (
    <svg viewBox="0 0 48 46" className="h-[46px] w-12">
      <defs>
        <linearGradient id="nppGreen" x1="0" y1="0" x2="0" y2="1">
          <stop offset="0" stopColor="#fff" />
          <stop offset="0.350" stopColor="#e9f27a" />
          <stop offset="0.650" stopColor="#86d11e" />
          <stop offset="1" stopColor="#11771a" />
        </linearGradient>
      </defs>
      <path d="M1 4h23l8 7 4 30-35 4z" fill="#fff" stroke="#8c8c8c" />
      <path d="M4 8h20M4 12h24M4 16h25" stroke="#c8ccd4" />
      <path d="M3 20h30l2 19-32 3z" fill="url(#nppGreen)" />
      <path d="M24 4v7h8" fill="#ddd" stroke="#8c8c8c" />
      <path d="M7 28c0-7 5-11 11-11 5 0 8 3 8 6-5 4-13 2-15 6" fill="#5cc22e" stroke="#1c4f12" />
      <path d="M14 28a4 4 0 1 0 3 5" fill="none" stroke="#1c4f12" strokeWidth="1.500" />
      <path d="M5 27h23" stroke="#6b3f1a" strokeWidth="1.500" />
      <circle cx="18" cy="18" r="3.500" fill="#fff" stroke="#222" />
      <circle cx="24" cy="18" r="2.800" fill="#fff" stroke="#222" />
      <circle cx="19" cy="19" r="1" />
      <path d="M30 34l1-6L42 5l4 2-12 23z" fill="#f5a81c" stroke="#a8660b" />
      <path d="M42 5l2-4 4 1-2 5z" fill="#9b4a4a" />
      <path d="M19 40v-9h4v9M25 35h4M30 35h4" fill="none" stroke="#2b5c1e" />
    </svg>
  );
}

function WeComLogo({ className }: { className?: string }) {
  return (
    <svg viewBox="0 0 48 44" className={className}>
      <defs>
        <linearGradient id="wecomBlue" x1="0" y1="0" x2="0" y2="1">
          <stop offset="0" stopColor="#2cb5ff" />
          <stop offset="1" stopColor="#1577e6" />
        </linearGradient>
      </defs>
      <path d="M38 18C37 9 29 3 20 3 10 3 2 10 2 19c0 6 3 10 7 13l-1 7 7-4c3 1 7 1 11 0" fill="none" stroke="url(#wecomBlue)" strokeWidth="4" />
      <path d="M38 19c3 0 4 3 3 5l2 3c-3 1-5 0-6-3-3-1-3-5 1-5z" fill="#4fc515" />
      <path d="M48 31c0 3-3 4-5 3l-4 2c-1-2 1-5 3-5 1-4 6-3 6 0z" fill="#0a96f2" />
      <path d="M37 43c-3 0-4-3-3-5l-2-3c2-1 5 0 6 3 3 1 3 5-1 5z" fill="#ff6a0a" />
      <path d="M26 31c0-3 3-4 5-3l4-3c1 3 0 5-3 6-1 4-6 3-6 0z" fill="#ffc83a" />
    </svg>
  );
}

function CodeShieldLogo() {
  return (
    <svg viewBox="0 0 48 48" className="size-12">
      <defs>
        <linearGradient id="shieldBlue" x1="0" y1="0" x2="0" y2="1">
          <stop offset="0" stopColor="#5cb0fb" />
          <stop offset="1" stopColor="#2c6be2" />
        </linearGradient>
      </defs>
      <rect width="48" height="48" rx="6" fill="url(#shieldBlue)" />
      <path d="M13 11h7l-1 4h-3l-8 7v4l8 7h2l3 1-2 3h-6L3 27v-6z" fill="#fff" />
      <path d="M28 37h7l10-10v-6L35 11h-4l-5 4 6 1 8 7v3l-8 7z" fill="#fff" />
      <path d="M18 19l6-3 6 3c0 6-2 10-6 12-4-2-6-6-6-12z" fill="#fff" />
      <path d="M25 19l-3 5h4l-3 4" fill="none" stroke="#3a7be8" strokeWidth="1.500" />
    </svg>
  );
}

function SpiralLogo() {
  return (
    <svg viewBox="0 0 48 40" className="h-10 w-12">
      <defs>
        <linearGradient id="spiralRed" x1="0.200" y1="1" x2="0.800" y2="0">
          <stop offset="0" stopColor="#e01f22" />
          <stop offset="0.500" stopColor="#ea3a2c" />
          <stop offset="1" stopColor="#f58a66" />
        </linearGradient>
      </defs>
      <path d="M1 17h12c0 4 2 6 5 5-2-12 4-20 14-20 9 0 15 6 14 15h-4c0 12-6 22-19 22C10 39 2 29 1 17z" fill="url(#spiralRed)" />
      <path d="M14 24c4 8 16 8 22 1 6-7 1-16-6-15-6 1-7 9-2 10 4 1 5-4 2-5" fill="none" stroke="#f3efc4" strokeWidth="1.800" />
    </svg>
  );
}

function TaskbarApp({ label, children, running }: { label: string; children: ReactNode; running?: boolean }) {
  return (
    <button aria-label={label} className="flex h-full w-[88px] flex-col items-center pt-[22px]">
      <span className="flex h-12 items-center">{children}</span>
      {running && <span className="mt-2 h-[6px] w-3 rounded-full bg-[#7c8068]" />}
    </button>
  );
}

function Taskbar() {
  return (
    <footer className="flex h-24 items-stretch justify-between border-t-2 border-black/10 bg-[linear-gradient(90deg,#d5efca_0%,#dcefb2_10%,#e0efb4_13%,#f1e7b0_16%,#e9f0a2_19%,#d8efc2_22%,#d5efc6_31%,#e2eebc_36%,#dff0b4_40%,#d9efba_50%,#e2f0ae_62%,#eaefa6_72%,#eeefa2_78%,#f3e9bc_86%,#f3e4cc_90%,#eff090_95%,#f3e8bc_100%)]">
      <div className="flex pl-[22px]">
        <TaskbarApp label="开始"><StartLogo /></TaskbarApp>
        <TaskbarApp label="Navicat" running><NavicatLogo /></TaskbarApp>
        <TaskbarApp label="文件资源管理器" running><ExplorerLogo /></TaskbarApp>
        <TaskbarApp label="播放器"><PlayerLogo /></TaskbarApp>
        <TaskbarApp label="助手"><RabbitLogo /></TaskbarApp>
        <TaskbarApp label="Microsoft Edge" running><EdgeLogo /></TaskbarApp>
        <TaskbarApp label="PyCharm"><PyCharmLogo /></TaskbarApp>
        <TaskbarApp label="Excel" running><ExcelLogo /></TaskbarApp>
        <TaskbarApp label="Notepad++" running><NotepadPPLogo /></TaskbarApp>
        <TaskbarApp label="企业微信" running><WeComLogo className="h-11 w-12" /></TaskbarApp>
        <TaskbarApp label="代码工具" running><CodeShieldLogo /></TaskbarApp>
        <TaskbarApp label="终端" running><SpiralLogo /></TaskbarApp>
        <button aria-label="任务计划程序" className="flex w-[88px] justify-center pt-2">
          <span className="h-[78px] w-[76px] rounded-lg border border-black/5 bg-white/40 pr-[7px]">
            <span className="flex h-full flex-col items-center rounded-lg bg-white/40 pt-[13px] pl-2">
              <svg viewBox="0 0 48 48" className="size-12 shrink-0">
                <circle cx="24" cy="24" r="22.500" fill="#e9eef1" stroke="#a9a5a8" strokeWidth="2.500" />
                <path d="M24 24L9 39A21 21 0 0 0 45 24z" fill="#fff" opacity="0.7" />
                <path d="M24 24V4a20 20 0 0 1 20 20z" fill="#e8ca88" />
                <path d="M24 5v23M20 24h23" stroke="#4e6f8c" strokeWidth="1.500" />
                <path d="M24 40v3M5 24h3M14 8l2 3M8 14l3 2M8 34l3-2M14 40l2-3M34 40l-2-3M40 34l-3-2M34 8l-2 3M40 14l-3 2" stroke="#6f8496" strokeWidth="1" />
              </svg>
              <span className="mt-2 h-[6px] w-8 shrink-0 rounded-full bg-[#0078d4]" />
            </span>
          </span>
        </button>
      </div>

      <div className="flex items-center pr-[39px] pb-[2px] text-[#111]">
        <button aria-label="显示隐藏的图标">
          <svg viewBox="0 0 26 14" className="h-[14px] w-[26px]"><path d="M1 13L13 1l12 12" fill="none" stroke="#111" strokeWidth="2" /></svg>
        </button>
        <button aria-label="企业微信通知" className="ml-[19px] flex size-8 items-center justify-center rounded-xs bg-white">
          <WeComLogo className="h-6 w-7" />
        </button>
        <button aria-label="更新" className="ml-4">
          <svg viewBox="0 0 32 32" className="size-8" fill="none" stroke="#111" strokeWidth="2.200">
            <path d="M1 16C1 7 8 1 16 1c6 0 11 3 14 8M30 1v8h-8M3 30v-7h8M3 23c3 5 7 8 13 8" />
            <circle cx="24" cy="24" r="8" fill="#ff9a00" stroke="#c98010" strokeWidth="1" />
          </svg>
        </button>
        <button aria-label="输入法" className="ml-7">
          <svg viewBox="0 0 28 32" className="h-8 w-7" fill="none">
            <path d="M3 9h22v12H3zM14 1v30" stroke="#77715c" strokeWidth="4.500" />
            <path d="M3 9h22v12H3zM14 1v30" stroke="#eee8d8" strokeWidth="2" />
          </svg>
        </button>
        <button aria-label="网络" className="ml-[33px]">
          <svg viewBox="0 0 32 24" className="h-6 w-8" fill="none" stroke="#111" strokeWidth="2.200" strokeLinecap="round">
            <path d="M1 9a21 21 0 0 1 30 0M6 14a14 14 0 0 1 20 0M11 18.500a7 7 0 0 1 10 0" />
            <circle cx="16" cy="21.500" r="1.800" fill="#111" />
          </svg>
        </button>
        <button aria-label="音量" className="ml-4">
          <svg viewBox="0 0 30 24" className="h-6 w-[30px]" fill="none" stroke="#111" strokeWidth="2">
            <path d="M1 8h5l7-6v20l-7-6H1zM19 7l10 10M29 7L19 17" strokeLinejoin="round" />
          </svg>
        </button>
        <button aria-label="电源" className="ml-4">
          <svg viewBox="0 0 34 26" className="h-[26px] w-[34px]">
            <path d="M3 0v4M9 0v4" stroke="#111" strokeWidth="2" />
            <path d="M0 4h12v5a5 5 0 0 1-3 5v5H4v-5a5 5 0 0 1-4-5z" fill="#111" />
            <path d="M14 5h13a3 3 0 0 1 3 3v12a3 3 0 0 1-3 3H9" fill="none" stroke="#111" strokeWidth="2" />
            <path d="M13 9h14v11H9v-4zM31 11h3v6h-3z" fill="#111" />
          </svg>
        </button>
        <div className="ml-7 text-right text-[22px] leading-8">
          <div>14:44</div>
          <div>2022/11/23</div>
        </div>
        <span className="ml-4 flex size-8 items-center justify-center rounded-full bg-[#0078d4] text-xl leading-none text-white">7</span>
      </div>
    </footer>
  );
}

export default function App() {
  return (
    <div className="relative flex min-h-screen w-full flex-col overflow-hidden bg-[#efefef] font-['Open_Sans','Noto_Sans_CJK_SC',sans-serif] text-2xl leading-8 text-black">
      <div className="bg-white">
        <TitleBar />
        <div className="flex h-11 items-center gap-[34px] border-b-2 border-[#b3b3b3] pl-5">
          <button>文件(F)</button>
          <button>操作(A)</button>
          <button>查看(V)</button>
          <button>帮助(H)</button>
        </div>
        <Toolbar />
      </div>

      <main className="flex flex-1 items-stretch gap-[6px] pt-3">
        <TreePane />
        <Sunken className="flex-1">
          <Sunken className="flex-1">
            <Sunken>
              <div className="overflow-hidden border-2 border-[#696969] bg-white">
                <TaskTable />
                <div className="mt-[33px] h-[33px] bg-[#efefef] pt-[7px] pr-[254px] pl-[34px]">
                  <div className="h-[19px] bg-[#858585]" />
                </div>
              </div>
            </Sunken>
            <Sunken className="mt-[10px] flex-1">
              <Tabs />
              <ConditionsPanel />
            </Sunken>
          </Sunken>
        </Sunken>
        <ActionsPane />
      </main>

      {/* Status bar */}
      <div className="flex h-11 justify-end border-t border-[#d5d5d5] pt-1 pr-1">
        <div className="w-[266px] border-l border-[#d5d5d5]" />
        <div className="w-[170px] border-x border-[#d5d5d5]" />
      </div>

      <Taskbar />
      <Thumbnails />
      <div className="absolute right-4 bottom-1 text-xl leading-8 text-[#e4e4dc] [text-shadow:1px_1px_2px_#555]">CSDN @不想做靓仔</div>
    </div>
  );
}
